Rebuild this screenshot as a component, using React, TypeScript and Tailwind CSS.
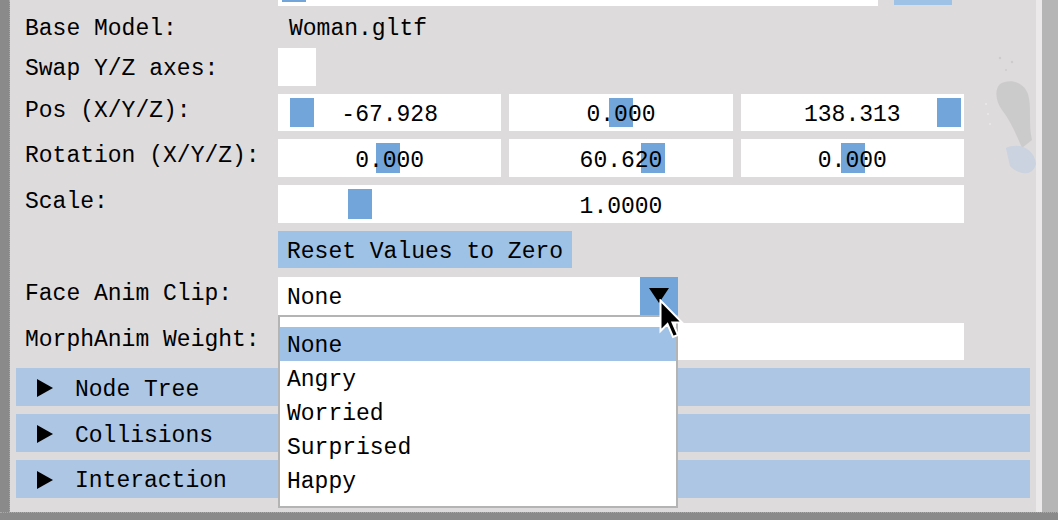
import React from "react"

// light imgui-ish property panel with an open combo popup

const ROW = "h-[37.8px]"
const TXT = "leading-none translate-y-[3px]"

function Label({ text, center }: { text: string; center?: boolean }) {
    return (
        <div className={`w-[262px] shrink-0 pl-[9px] flex ${center ? "items-center" : "items-start pt-[4px]"}`}>
            <span className={center ? "leading-[26px] translate-y-[2px]" : "leading-[26px]"}>{text}</span>
        </div>
    )
}

function SliderFrame({ value, grab, className = "" }: { value: string; grab: number; className?: string }) {
    return (
        <div className={`relative bg-white flex items-center justify-center ${className}`}>
            <div className="absolute top-[4px] bottom-[4px] w-[24px] bg-[#72a5d9]" style={{ left: grab }} />
            <span className={`relative ${TXT}`}>{value}</span>
        </div>
    )
}

function Header({ title }: { title: string }) {
    return (
        <div className={`${ROW} shrink-0 bg-[#adc6e4] flex items-center pl-[21px]`}>
            <svg width="16" height="18" viewBox="0 0 16 18" className="shrink-0 translate-y-[1px]">
                <path d="M0 0 L16 9 L0 18 Z" fill="#000" />
            </svg>
            <span className={`ml-[22px] ${TXT}`}>{title}</span>
        </div>
    )
}

const faceClips = ["None", "Angry", "Worried", "Surprised", "Happy"]

export default function App() {
    return (
        <div className="relative w-[1058px] h-[520px] overflow-hidden flex flex-col bg-[#8a8a8a] font-['Liberation_Mono',monospace] text-[23px] text-black">
            <div className="flex flex-1 min-h-0">
                <div className="w-[10px] shrink-0 bg-[#8a8a8a] border-r border-dotted border-[#a8a8a8]" />
                <div className="relative flex-1 bg-[#dddbdc] px-[6px] flex flex-col gap-2 -mt-[32px]">
                    {/* partially scrolled-off slider row */}
                    <div className={`${ROW} shrink-0 flex`}>
                        <div className="w-[262px] shrink-0" />
                        <div className="relative w-[600px] bg-white">
                            <div className="absolute top-[4px] bottom-[4px] left-[4px] w-[24px] bg-[#72a5d9]" />
                        </div>
                        <div className="ml-[16px] w-[58px] h-[36.8px] bg-[#9ec1e6]" />
                    </div>

                    <div className="h-[26px] shrink-0 flex items-center">
                        <Label text="Base Model:" center />
                        <span className={`pl-[11px] ${TXT}`}>Woman.gltf</span>
                    </div>

                    <div className={`${ROW} shrink-0 flex`}>
                        <Label text="Swap Y/Z axes:" center />
                        <div className="w-[38px] h-full bg-white" />
                    </div>

                    <div className={`${ROW} shrink-0 flex`}>
                        <Label text="Pos (X/Y/Z):" />
                        <div className="w-[686px] flex gap-2">
                            <SliderFrame value="-67.928" grab={12} className="flex-1" />
                            <SliderFrame value="0.000" grab={100} className="flex-1" />
                            <SliderFrame value="138.313" grab={196} className="flex-1" />
                        </div>
                    </div>

                    <div className={`${ROW} shrink-0 flex`}>
                        <Label text="Rotation (X/Y/Z):" />
                        <div className="w-[686px] flex gap-2">
                            <SliderFrame value="0.000" grab={98} className="flex-1" />
                            <SliderFrame value="60.620" grab={132} className="flex-1" />
                            <SliderFrame value="0.000" grab={100} className="flex-1" />
                        </div>
                    </div>

                    <div className={`${ROW} shrink-0 flex`}>
                        <Label text="Scale:" />
                        <SliderFrame value="1.0000" grab={70} className="w-[686px]" />
                    </div>

                    <div className={`${ROW} shrink-0 flex`}>
                        <div className="w-[262px] shrink-0" />
                        <div className="bg-[#9ec1e6] px-[9px] flex items-center h-[37px]">
                            <span className={TXT}>Reset Values to Zero</span>
                        </div>
                    </div>

                    <div className={`${ROW} shrink-0 flex relative z-10`}>
                        <Label text="Face Anim Clip:" />
                        <div className="relative w-[400px] flex">
                            <div className="flex-1 bg-white flex items-center pl-[9px]">
                                <span className={TXT}>None</span>
                            </div>
                            <div className="w-[38px] bg-[#72a5d9] flex items-center justify-center">
                                <svg width="20" height="15" viewBox="0 0 20 15">
                                    <path d="M0 0 L20 0 L10 15 Z" fill="#000" />
                                </svg>
                            </div>
                            <div className="absolute top-full left-0 w-[400px] bg-white border-2 border-[#b4b4b4] pt-[10px] pb-[9px] flex flex-col">
                                {faceClips.map((clip, i) => (
                                    <div
                                        key={clip}
                                        className={`h-[34px] px-[7px] flex items-center ${i === 0 ? "bg-[#9fc1e6]" : ""}`}
                                    >
                                        <span className={TXT}>{clip}</span>
                                    </div>
                                ))}
                            </div>
                        </div>
                    </div>

                    <div className={`${ROW} shrink-0 flex`}>
                        <Label text="MorphAnim Weight:" />
                        <div className="w-[686px] bg-white" />
                    </div>

                    <Header title="Node Tree" />
                    <Header title="Collisions" />
                    <Header title="Interaction" />

                    {/* faint backdrop figure peeking through on the right */}
                    <svg className="absolute right-[0px] top-[76px] opacity-30" width="60" height="150" viewBox="0 0 60 150">
                        <g fill="#a8a8a8">
                            <circle cx="24" cy="14" r="1.2" />
                            <circle cx="36" cy="18" r="1.2" />
                            <circle cx="30" cy="26" r="1" />
                            <path d="M24 40 C34 34 48 38 52 50 C56 64 52 80 56 96 L46 104 C40 90 34 76 26 66 C20 58 18 46 24 40 Z" />
                        </g>
                        <g fill="#ffffff">
                            <circle cx="10" cy="60" r="1.2" />
                            <circle cx="12" cy="70" r="1.2" />
                            <circle cx="14" cy="80" r="1.2" />
                        </g>
                        <path d="M30 104 C42 98 58 104 60 120 C56 134 42 130 34 122 Z" fill="#9fc1e6" />
                    </svg>
                </div>
                <div className="w-[6px] shrink-0 bg-[#ebe9ea]" />
                <div className="w-[16px] shrink-0 bg-[#b5b5b5]" />
            </div>
            <div className="h-[8px] shrink-0 bg-[#8a8a8a] border-t border-dotted border-[#a8a8a8]" />

            {/* mouse cursor over the combo arrow */}
            <svg className="absolute left-[659px] top-[299px] z-20" width="28" height="42" viewBox="0 0 28 42">
                <path
                    d="M1.5 1.5 L1.5 32 L8.5 25 L14 38 L19 36 L13.5 23.5 L23 23.5 Z"
                    fill="#000"
                    stroke="#fff"
                    strokeWidth="2"
                    strokeLinejoin="miter"
                />
            </svg>
        </div>
    )
}
